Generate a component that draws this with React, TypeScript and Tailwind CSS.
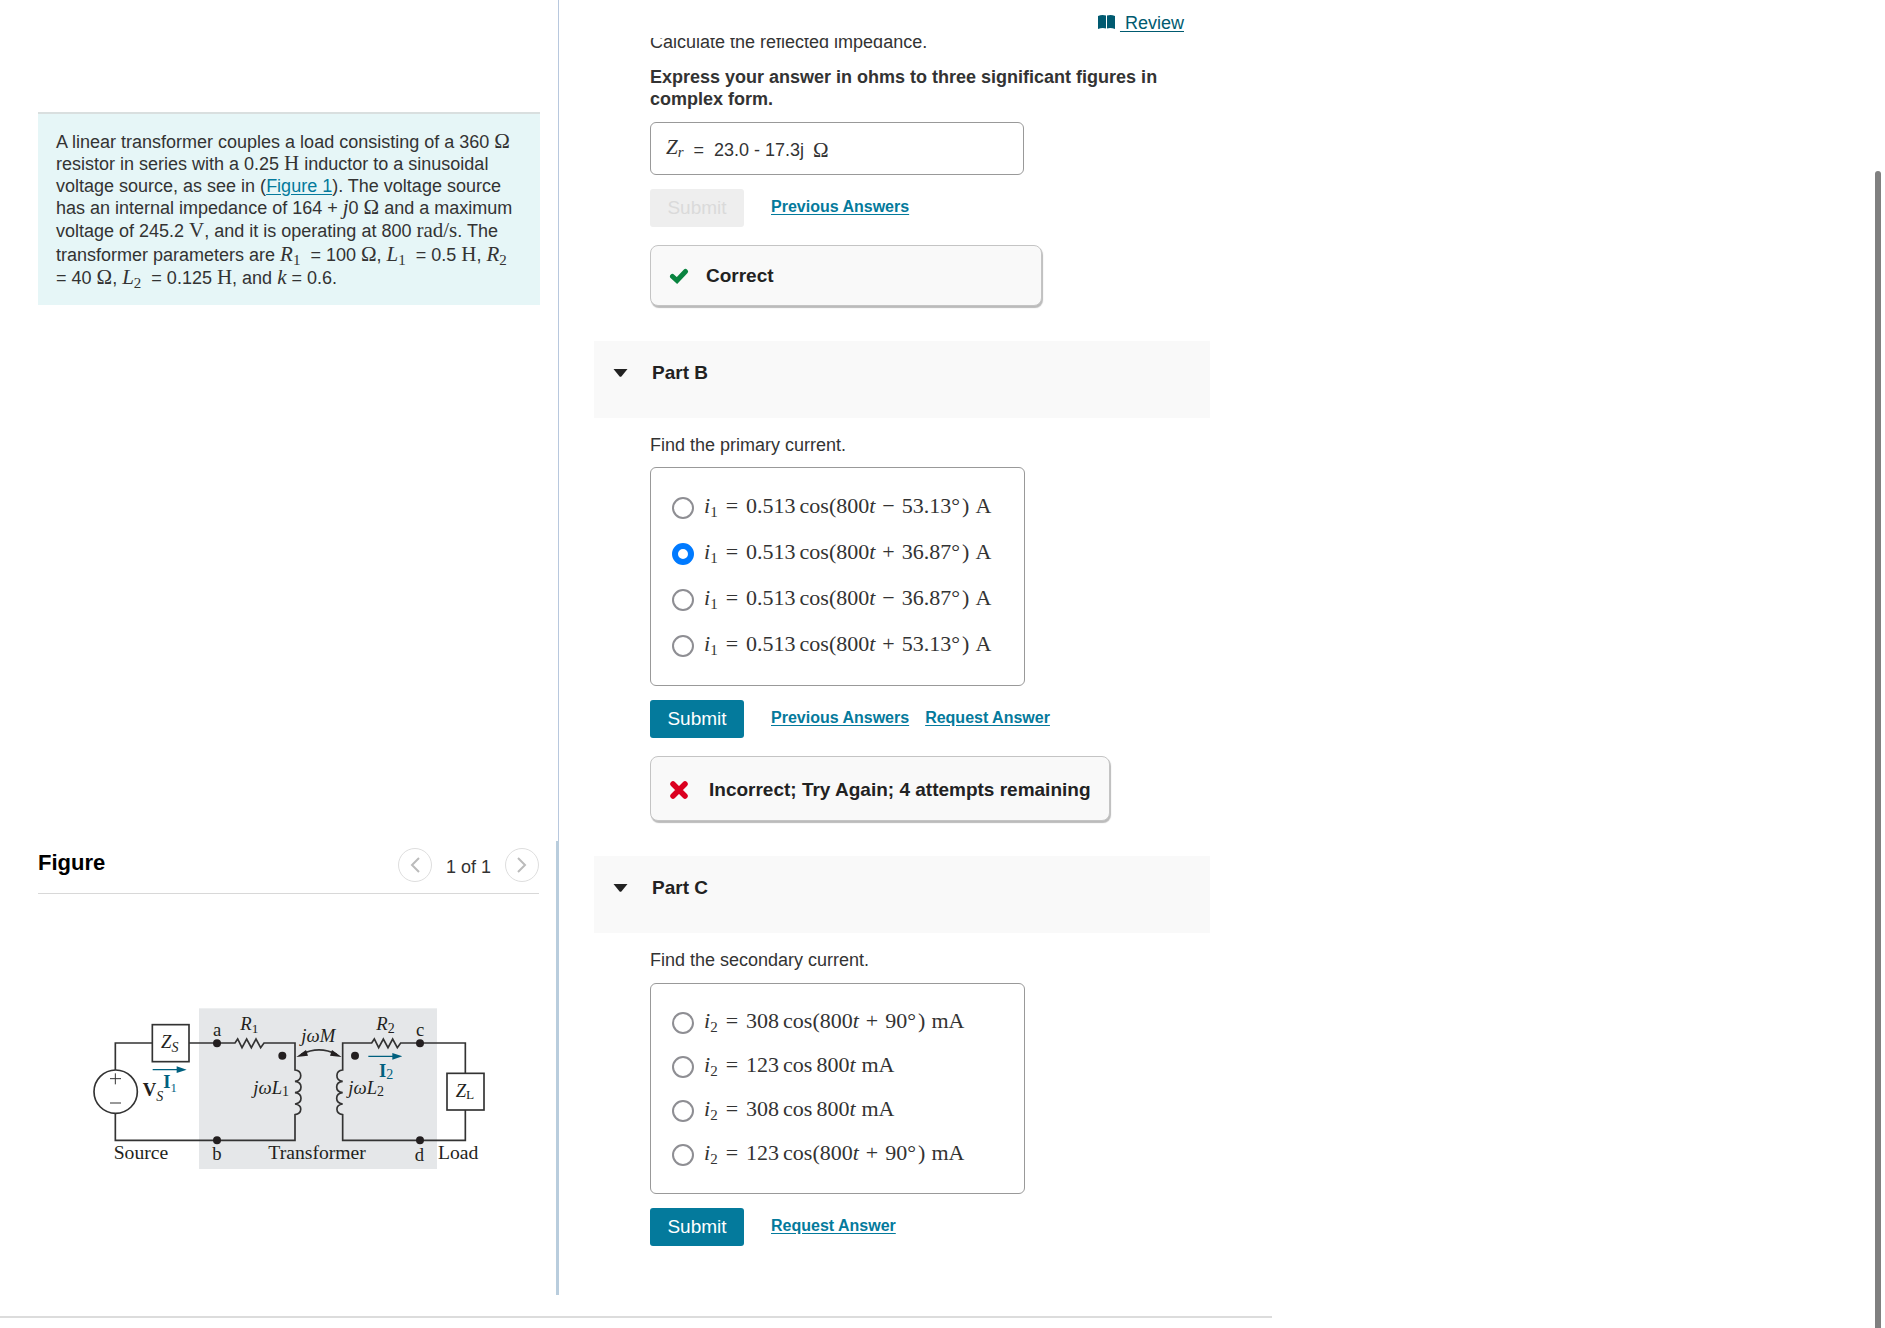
import { useState, type ReactNode } from 'react';

type Option = { id: string; body: ReactNode };

const Op = ({ children }: { children: ReactNode }) => <span className="mx-[7px]">{children}</span>;

function M({ children }: { children: ReactNode }) {
  return <span className="font-['Liberation_Serif',serif] text-[21px] leading-[0]">{children}</span>;
}

function V({ name, sub }: { name: string; sub?: string }) {
  return (
    <span className="font-['Liberation_Serif',serif] text-[21px] leading-[0]">
      <i>{name}</i>
      {sub && <sub className="text-[15px]">{sub}</sub>}
    </span>
  );
}

function Current({ n, amp, arg, unit }: { n: string; amp: string; arg?: [string, string]; unit: string }) {
  return (
    <span className="whitespace-nowrap">
      <i>i</i><sub className="text-[15px]">{n}</sub>
      <span className="mx-2">=</span>
      {amp}
      <span className="ml-1">cos</span>
      {arg ? (
        <>(800<i>t</i><Op>{arg[0]}</Op>{arg[1]}°<span className="ml-0.5">)</span></>
      ) : (
        <span className="ml-1">800<i>t</i></span>
      )}
      <span className="ml-1.5">{unit}</span>
    </span>
  );
}

const primaryOptions: Option[] = [
  { id: 'b1', body: <Current n="1" amp="0.513" arg={['−', '53.13']} unit="A" /> },
  { id: 'b2', body: <Current n="1" amp="0.513" arg={['+', '36.87']} unit="A" /> },
  { id: 'b3', body: <Current n="1" amp="0.513" arg={['−', '36.87']} unit="A" /> },
  { id: 'b4', body: <Current n="1" amp="0.513" arg={['+', '53.13']} unit="A" /> },
];

const secondaryOptions: Option[] = [
  { id: 'c1', body: <Current n="2" amp="308" arg={['+', '90']} unit="mA" /> },
  { id: 'c2', body: <Current n="2" amp="123" unit="mA" /> },
  { id: 'c3', body: <Current n="2" amp="308" unit="mA" /> },
  { id: 'c4', body: <Current n="2" amp="123" arg={['+', '90']} unit="mA" /> },
];

function RadioBox({ name, options, initial, rowClass }: { name: string; options: Option[]; initial?: string; rowClass: string }) {
  const [selected, setSelected] = useState(initial);
  return (
    <div className="w-[375px] rounded-md border border-[#999] px-[21px] pt-[17px] pb-4">
      {options.map((o) => (
        <label key={o.id} className={`flex items-center gap-[10px] font-['Liberation_Serif',serif] text-[22px] leading-6 ${rowClass}`}>
          <input
            type="radio"
            name={name}
            checked={selected === o.id}
            onChange={() => setSelected(o.id)}
            className="size-[22px] shrink-0 appearance-none rounded-full border-2 border-[#8e8e93] bg-white checked:border-[6px] checked:border-[#007aff]"
          />
          <span className="pb-1">{o.body}</span>
        </label>
      ))}
    </div>
  );
}

function PartHeader({ title }: { title: string }) {
  return (
    <div className="h-[77px] bg-[#f9f9f9] pt-[18px] pl-[19px]">
      <button className="flex items-center gap-6 text-[19px] leading-7 font-bold text-[#222]">
        <svg className="h-2 w-[15px]" viewBox="0 0 15 8"><path d="M0.5 0h14L8.4 7.4Q7.5 8.3 6.6 7.4Z" fill="#222" /></svg>
        {title}
      </button>
    </div>
  );
}

function Actions({ links, disabled }: { links: string[]; disabled?: boolean }) {
  return (
    <div className="mt-[14px] flex items-center">
      <button
        disabled={disabled}
        className="h-[38px] w-[94px] rounded-[3px] bg-[#047a9c] text-[19px] text-white disabled:bg-[#eee] disabled:text-[#dadada]">
        Submit
      </button>
      <div className="ml-[27px] flex gap-4 pb-0.5 text-[16px] leading-5 font-bold">
        {links.map((l) => <a key={l} href="#" className="text-[#047a9c] underline underline-offset-2">{l}</a>)}
      </div>
    </div>
  );
}

function Circuit() {
  return (
    <svg className="h-[200px] w-[420px] font-['Liberation_Serif',serif]" viewBox="0 0 1260 600" fontSize="56" fill="#231f20" role="img" aria-label="Linear transformer circuit">
      <rect x="357" y="55" width="714" height="482" fill="#e5e7e9" />
      <g fill="none" stroke="#333" strokeWidth="5">
        <path d="M106 240V159H217M327 159H465l8-12 13 26 14-26 14 26 14-26 14 26 10-14H645V240c22 2 24 31 0 34 24 3 24 31 0 34 24 3 24 31 0 34 24 3 22 29 0 32V451H106V371" />
        <path d="M1156 250V159H962l-10 14-14-26-14 26-14-26-14 26-13-26-8 12H788V240c-22 2-24 31 0 34-24 3-24 31 0 34-24 3-24 31 0 34-24 3-22 29 0 32V451H1156V360" />
        <circle cx="107" cy="305" r="65" fill="#fff" />
        <rect x="217" y="104" width="110" height="111" fill="#fff" />
        <rect x="1101" y="250" width="111" height="110" fill="#fff" />
        <path d="M90 266h33M106 250v33M90 339h33" strokeWidth="3" />
        <path d="M664 193Q717 166 770 193" />
      </g>
      <path d="M649 201l29-21 6 17zM785 201l-29-21-6 17z" />
      <circle cx="411" cy="160" r="12" />
      <circle cx="411" cy="451" r="12" />
      <circle cx="1020" cy="160" r="12" />
      <circle cx="1020" cy="451" r="12" />
      <circle cx="607" cy="197" r="12" />
      <circle cx="825" cy="197" r="12" />
      <g fill="#00607f">
        <path d="M218 237h72v-8l30 10-30 10v-8h-72zM865 197h72v-8l30 10-30 10v-8h-72z" />
        <text x="250" y="293"><tspan fontWeight="bold">I</tspan><tspan fontSize="38" dy="12">1</tspan></text>
        <text x="897" y="260"><tspan fontWeight="bold">I</tspan><tspan fontSize="42" dy="8">2</tspan></text>
      </g>
      <text x="243" y="174" fontStyle="italic">Z<tspan fontSize="42" dy="12">S</tspan></text>
      <text x="188" y="318"><tspan fontWeight="bold">V</tspan><tspan fontSize="42" dy="14" fontStyle="italic">S</tspan></text>
      <text x="399" y="137">a</text>
      <text x="397" y="510">b</text>
      <text x="1008" y="137">c</text>
      <text x="1004" y="512">d</text>
      <text x="481" y="121"><tspan fontStyle="italic">R</tspan><tspan fontSize="40" dy="8">1</tspan></text>
      <text x="889" y="121"><tspan fontStyle="italic">R</tspan><tspan fontSize="42" dy="8">2</tspan></text>
      <text x="664" y="156" fontStyle="italic">jωM</text>
      <text x="520" y="311"><tspan fontStyle="italic">jωL</tspan><tspan fontSize="42" dy="8">1</tspan></text>
      <text x="805" y="311"><tspan fontStyle="italic">jωL</tspan><tspan fontSize="42" dy="8">2</tspan></text>
      <text x="1127" y="320"><tspan fontStyle="italic">Z</tspan><tspan fontSize="40" dy="8">L</tspan></text>
      <text x="101" y="508" fontSize="59">Source</text>
      <text x="565" y="508" fontSize="59">Transformer</text>
      <text x="1074" y="508" fontSize="59">Load</text>
    </svg>
  );
}

export default function App() {
  return (
    <div className="relative min-h-screen bg-white font-['Liberation_Sans',Arial,sans-serif] text-[18px] leading-[22px] text-[#333]">
      <div className="flex max-w-[1272px] border-b-2 border-[#dcdcdc]">

        {/* Problem statement and figure */}
        <aside className="flex w-[559px] shrink-0 flex-col pb-[21px]">
          <section className="flex-1 border-r border-[#b8c8de] pt-[112px] pr-[18px] pl-[38px]">
            <div className="border-t-2 border-[#d9dfdf] bg-[#e6f6f7] pt-[17px] pb-4 pl-[18px] whitespace-nowrap">
              <p>A linear transformer couples a load consisting of a 360 <M>Ω</M></p>
              <p>resistor in series with a 0.25 <M>H</M> inductor to a sinusoidal</p>
              <p>voltage source, as see in (<a href="#figure" className="text-[#047a9c] underline underline-offset-2">Figure 1</a>). The voltage source</p>
              <p>has an internal impedance of 164 + <V name="j" />0 <M>Ω</M> and a maximum</p>
              <p className="leading-6">voltage of 245.2 <M>V</M>, and it is operating at 800 <M>rad/s</M>. The</p>
              <p className="leading-6">transformer parameters are <V name="R" sub="1" />&nbsp; = 100 <M>Ω</M>, <V name="L" sub="1" />&nbsp; = 0.5 <M>H</M>, <V name="R" sub="2" /></p>
              <p>= 40 <M>Ω</M>, <V name="L" sub="2" />&nbsp; = 0.125 <M>H</M>, and <V name="k" /> = 0.6.</p>
            </div>
          </section>

          <section id="figure" className="border-r-[3px] border-[#b9cddd] pr-[17px] pb-[105px] pl-[38px]">
            <div className="flex h-[53px] items-center border-b border-[#d8d8d8] pb-1">
              <h2 className="flex-1 pb-1 text-[22px] font-bold text-black">Figure</h2>
              <button aria-label="Previous figure" className="flex size-[34px] items-center justify-center rounded-full border border-[#dedede]">
                <svg className="h-4 w-[10px]" viewBox="0 0 10 16" fill="none" stroke="#bbb" strokeWidth="2"><path d="M9 1L2 8l7 7" /></svg>
              </button>
              <span className="mx-[14px] pt-1">1 of 1</span>
              <button aria-label="Next figure" className="flex size-[34px] items-center justify-center rounded-full border border-[#dedede]">
                <svg className="h-4 w-[10px]" viewBox="0 0 10 16" fill="none" stroke="#bbb" strokeWidth="2"><path d="M1 1l7 7-7 7" /></svg>
              </button>
            </div>
            <div className="pt-24 pl-[42px]"><Circuit /></div>
          </section>
        </aside>

        <main className="min-w-0 flex-1 pr-[62px] pb-[70px] pl-[35px]">
          <header className="flex h-[38px] justify-end pt-3 pr-[26px]">
            <a href="#" className="flex items-start gap-[5px] text-[#005a70]">
              <svg className="mt-[3px] h-[14px] w-[17px]" viewBox="0 0 17 14" fill="#005a70">
                <path d="M0 1Q4-.6 8 .6V13.400Q4 12.400 0 14ZM17 1Q13-.6 9 .6V13.400Q13 12.400 17 14Z" />
              </svg>
              <span className="whitespace-pre underline underline-offset-2"> Review</span>
            </a>
          </header>

          <div className="overflow-hidden pl-14">
            <p className="-mt-[7px]">Calculate the reflected impedance.</p>
            <p className="mt-[13px] w-[520px] font-bold">Express your answer in ohms to three significant figures in complex form.</p>
            <div className="mt-3 flex h-[53px] w-[374px] items-center rounded-md border border-[#999] pt-0.5 pl-[15px]">
              <label htmlFor="zr" className="pb-1"><V name="Z" /><sub className="font-['Liberation_Serif',serif] text-[15px] italic">r</sub></label>
              <span className="mx-[10px]">=</span>
              <input id="zr" readOnly defaultValue="23.0 - 17.3j" className="w-[99px] bg-transparent outline-none" />
              <M>Ω</M>
            </div>
            <Actions links={['Previous Answers']} disabled />
            <div className="mt-[18px] mb-[35px] flex h-[61px] w-[392px] items-center rounded-lg border border-[#c4c4c4] bg-[#f9f9f9] pl-[18px] text-[19px] font-bold text-[#222] shadow-[1px_2px_1px_#bbb]">
              <svg className="mr-[17px] h-4 w-5" viewBox="0 0 20 16"><path d="M3.500 8.500l4.500 4L16.500 3.500" fill="none" stroke="#0a8440" strokeWidth="5" strokeLinecap="round" /></svg>
              Correct
            </div>
          </div>

          <PartHeader title="Part B" />
          <div className="pt-4 pb-[35px] pl-14">
            <p className="mb-[11px]">Find the primary current.</p>
            <RadioBox name="primary" options={primaryOptions} initial="b2" rowClass="h-[46px]" />
            <Actions links={['Previous Answers', 'Request Answer']} />
            <div className="mt-[18px] flex h-[65px] w-fit items-center rounded-lg border border-[#c4c4c4] bg-[#f9f9f9] pt-0.5 pr-[18px] pl-[18px] text-[19px] font-bold text-[#222] shadow-[1px_2px_1px_#bbb]">
              <svg className="mr-5 size-5" viewBox="0 0 20 20"><path d="M4 4l12 12M16 4l-12 12" fill="none" stroke="#db0020" strokeWidth="5.500" strokeLinecap="round" /></svg>
              Incorrect; Try Again; 4 attempts remaining
            </div>
          </div>

          <PartHeader title="Part C" />
          <div className="pt-4 pl-14">
            <p className="mb-3">Find the secondary current.</p>
            <RadioBox name="secondary" options={secondaryOptions} rowClass="h-11" />
            <Actions links={['Request Answer']} />
          </div>
        </main>
      </div>

      {/* scroll thumb */}
      <div className="absolute top-[171px] right-1 bottom-0 w-[6px] rounded-t-full bg-[#808080]" />
    </div>
  );
}
